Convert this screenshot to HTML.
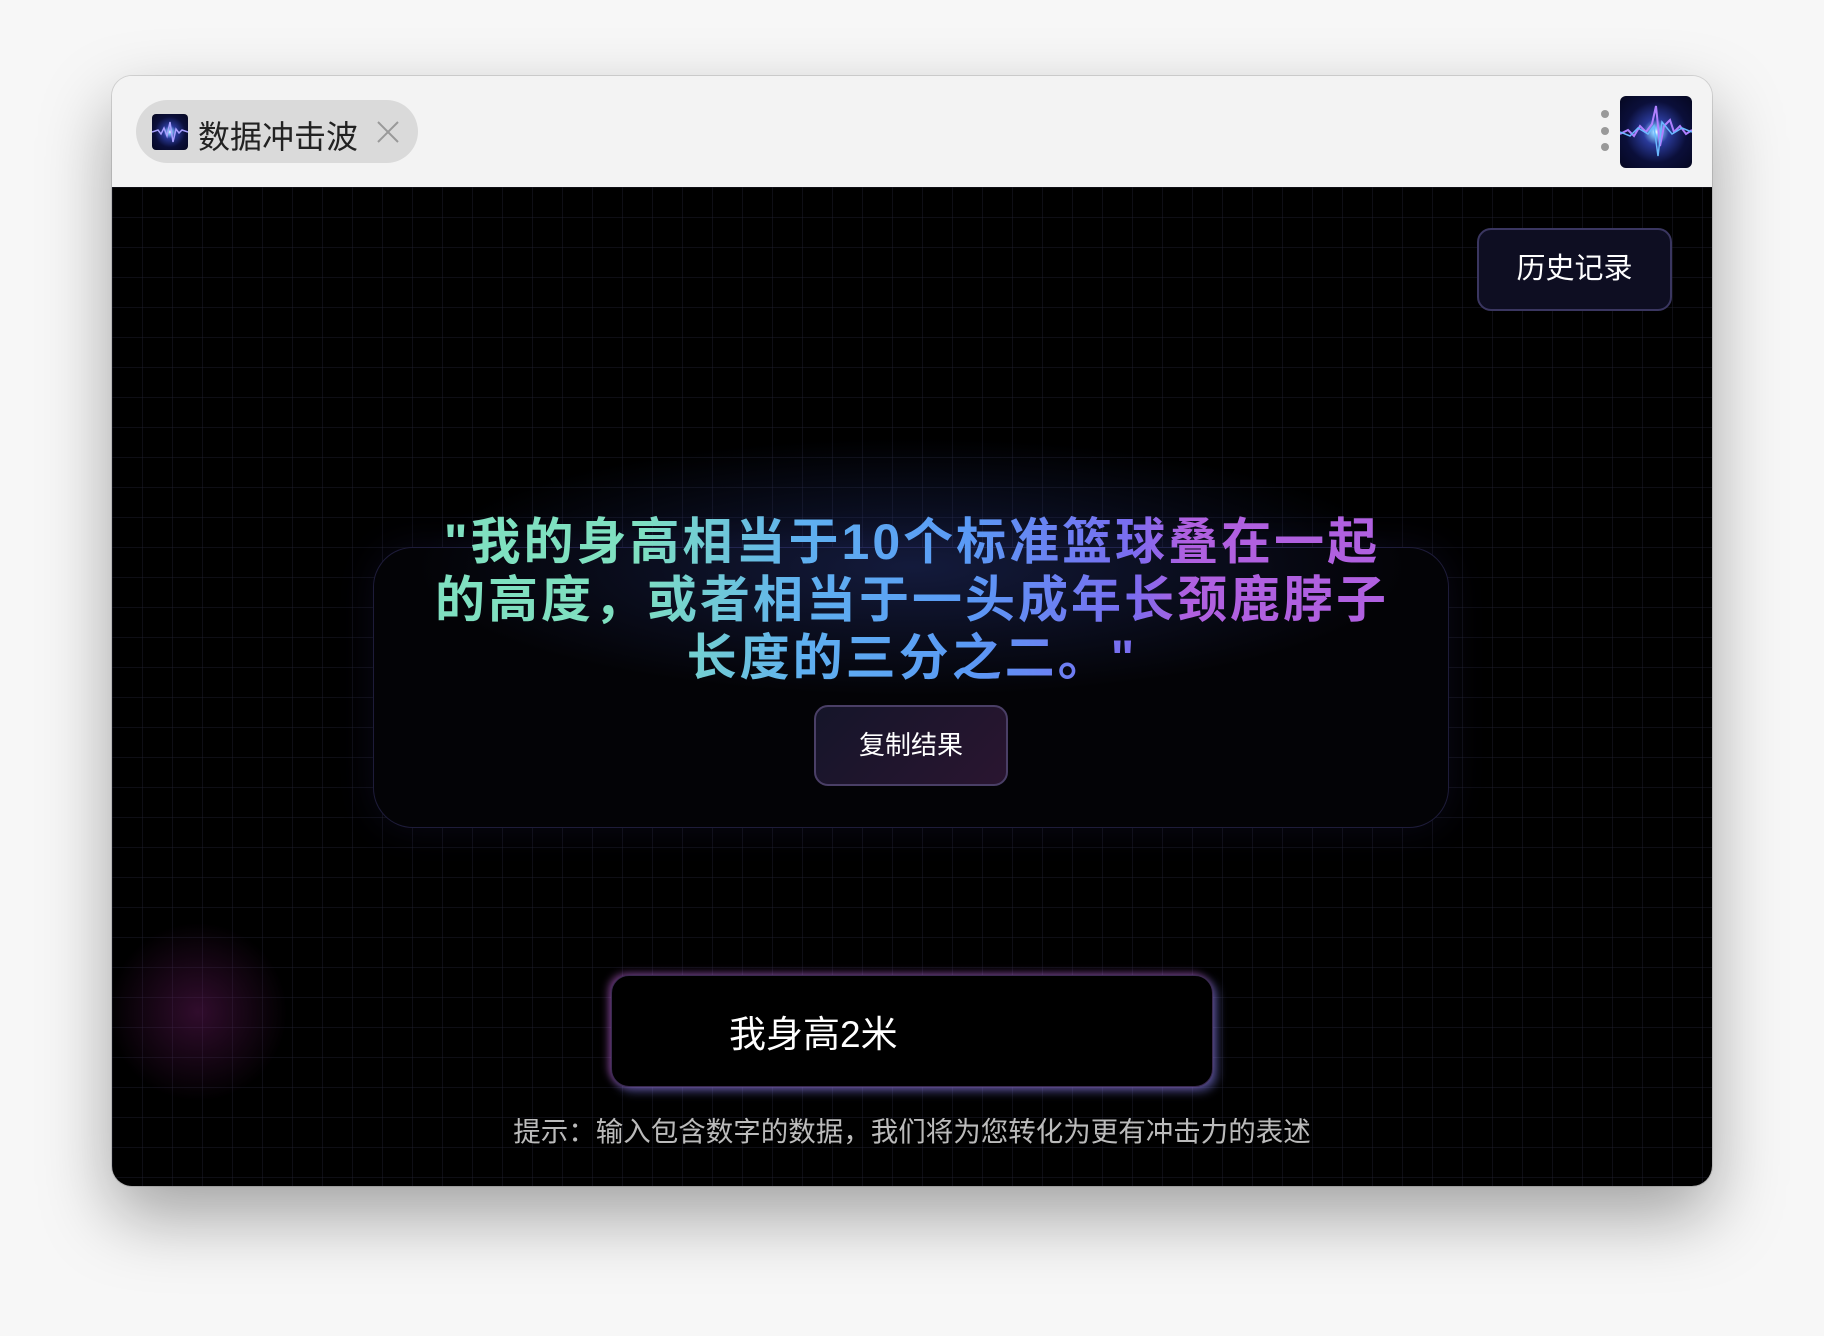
<!DOCTYPE html>
<html><head><meta charset="utf-8"><style>
*{margin:0;padding:0;box-sizing:border-box}
body{width:1824px;height:1336px;background:#f7f7f7;position:relative;overflow:hidden;font-family:"Liberation Sans","Noto Sans CJK SC",sans-serif}
.win{position:absolute;left:112px;top:76px;width:1600px;height:1110px;border-radius:20px;overflow:hidden;box-shadow:0 30px 70px rgba(0,0,0,.35),0 0 0 1px rgba(0,0,0,.12)}
.tb{position:absolute;left:0;top:0;width:100%;height:111px;background:#f3f3f3}
.tab{position:absolute;left:24px;top:24px;width:282px;height:63px;border-radius:32px;background:#dadada}
.ico{position:absolute;background:radial-gradient(circle at 50% 50%,#fff 0,#8cf 6%,#2a3a9a 25%,#0b0f3a 60%,#050720 100%);border-radius:4px;overflow:hidden}
.tab span{position:absolute;left:62px;top:12px;font-size:32px;color:#222}
.x{position:absolute;left:240px;top:20px;width:24px;height:24px}
.main{position:absolute;left:0;top:111px;width:100%;height:999px;background:#000;
background-image:linear-gradient(rgba(40,40,60,.35) 1px,transparent 1px),linear-gradient(90deg,rgba(40,40,60,.35) 1px,transparent 1px);background-size:30px 30px}
.hist{position:absolute;left:1365px;top:41px;width:195px;height:83px;border-radius:14px;background:#0e0e22;border:2px solid #3a3660;color:#fff;font-size:29px;text-align:center;line-height:79px}
.card{position:absolute;left:261px;top:360px;width:1076px;height:281px;border-radius:40px;background:#030306;border:1px solid #1e1c3a;box-shadow:0 0 40px rgba(70,60,160,.15)}
.glow{position:absolute;left:300px;top:250px;width:1000px;height:260px;background:radial-gradient(ellipse at center,rgba(50,70,160,.35),transparent 70%)}
.q{position:absolute;left:250px;top:326px;width:1100px;text-align:center;font-size:50px;font-weight:bold;line-height:58px;letter-spacing:3px;
background:linear-gradient(90deg,#7fe0c0 25%,#5fb0f0 40%,#5a9af5 55%,#7a6cf0 70%,#b060e0 75%);-webkit-background-clip:text;background-clip:text;color:transparent}
.copy{position:absolute;left:702px;top:518px;width:194px;height:81px;border-radius:14px;background:linear-gradient(135deg,#15152a,#2a1530);border:2px solid #4a3f66;color:#fff;font-size:26px;text-align:center;line-height:77px}
.inp{position:absolute;left:499px;top:788px;width:602px;height:112px;border-radius:18px;background:#000;border:1px solid #3a2a50;box-shadow:-3px -2px 8px rgba(200,100,220,.5),4px 4px 10px rgba(140,140,255,.55)}
.inp span{position:absolute;left:117px;top:28px;font-size:37px;color:#fff}
.hint{position:absolute;left:0;width:100%;top:922px;text-align:center;font-size:27.5px;color:#bbb}
.pg{position:absolute;left:-4px;top:735px;width:180px;height:180px;background:radial-gradient(circle,rgba(120,30,110,.4),transparent 70%)}
</style></head><body>
<div class="win">
<div class="tb">
 <div class="tab"><div class="ico" style="left:16px;top:14px;width:36px;height:36px"><svg width="36" height="36"><path d="M0 18 L6 16 L9 20 L12 14 L15 22 L18 8 L21 28 L24 15 L27 19 L30 16 L36 18" stroke="#a8a0ff" stroke-width="1.5" fill="none"/></svg></div><span>数据冲击波</span>
 <svg class="x" viewBox="0 0 24 24"><path d="M2 2L22 22M22 2L2 22" stroke="#999" stroke-width="2"/></svg></div>
 <div style="position:absolute;left:1489px;top:34px;width:8px;height:8px;border-radius:50%;background:#999"></div>
 <div style="position:absolute;left:1489px;top:51px;width:8px;height:8px;border-radius:50%;background:#999"></div>
 <div style="position:absolute;left:1489px;top:67px;width:8px;height:8px;border-radius:50%;background:#999"></div>
 <div class="ico" style="left:1508px;top:20px;width:72px;height:72px;border-radius:6px"><svg width="72" height="72"><path d="M0 38 L8 34 L14 40 L20 30 L26 36 L32 28 L36 10 L40 50 L44 30 L50 24 L54 36 L60 30 L66 38 L72 34" stroke="#b080ff" stroke-width="2" fill="none"/><path d="M0 36 L10 40 L18 32 L28 38 L34 30 L38 60 L42 26 L52 38 L62 32 L72 36" stroke="#6ab8ff" stroke-width="1.5" fill="none"/></svg></div>
</div>
<div class="main">
 <div class="pg"></div>
 <div class="hist">历史记录</div>
 <div class="card"></div>
 <div class="glow"></div>
 <div class="q">"我的身高相当于10个标准篮球叠在一起<br>的高度，或者相当于一头成年长颈鹿脖子<br>长度的三分之二。"</div>
 <div class="copy">复制结果</div>
 <div class="inp"><span>我身高2米</span></div>
 <div class="hint">提示：输入包含数字的数据，我们将为您转化为更有冲击力的表述</div>
</div>
</div>
</body></html>
